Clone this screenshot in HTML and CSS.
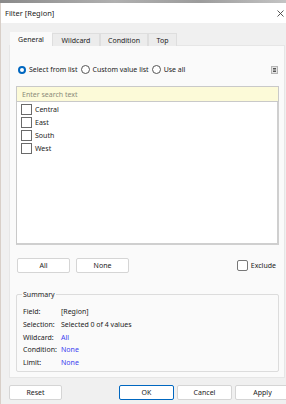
FILE: index.html
```
<!DOCTYPE html>
<html lang="en">
<head>
    <meta charset="UTF-8">
    <meta name="viewport" content="width=device-width, initial-scale=1.0">
    <title>Filter [Region]</title>
    <link rel="stylesheet" href="styles.css">
</head>
<body>
    <div class="backdrop"></div>
    <div class="dialog">
        <div class="titlebar">
            <span class="title">Filter [Region]</span>
            <span class="close">
                <svg width="7" height="7" viewBox="0 0 7 7">
                    <path d="M0.5 0.5 L6.5 6.5 M6.5 0.5 L0.5 6.5" stroke="#444" stroke-width="0.9"/>
                </svg>
            </span>
        </div>

        <!-- Tabs -->
        <div class="tabs">
            <div class="tab active">General</div>
            <div class="tab">Wildcard</div>
            <div class="tab">Condition</div>
            <div class="tab">Top</div>
        </div>

        <div class="panel">
            <div class="mode-row">
                <label class="radio"><span class="dot checked"></span>Select from list</label>
                <label class="radio"><span class="dot"></span>Custom value list</label>
                <label class="radio"><span class="dot"></span>Use all</label>
                <span class="menu-btn">
                    <svg width="7" height="8" viewBox="0 0 7 8">
                        <rect x="0.5" y="0.5" width="6" height="7" fill="#e4e4e4" stroke="#b5b5b5"/>
                        <line x1="2" y1="2.5" x2="5" y2="2.5" stroke="#555"/>
                        <line x1="2" y1="4" x2="5" y2="4" stroke="#555"/>
                        <line x1="2" y1="5.5" x2="5" y2="5.5" stroke="#555"/>
                    </svg>
                </span>
            </div>

            <div class="search">Enter search text</div>
            <div class="list">
                <div class="item"><span class="box"></span>Central</div>
                <div class="item"><span class="box"></span>East</div>
                <div class="item"><span class="box"></span>South</div>
                <div class="item"><span class="box"></span>West</div>
            </div>

            <div class="select-row">
                <button class="btn">All</button>
                <button class="btn">None</button>
                <label class="exclude"><span class="box round"></span>Exclude</label>
            </div>

            <fieldset class="summary">
                <legend>Summary</legend>
                <div class="srow"><span class="skey">Field:</span><span>[Region]</span></div>
                <div class="srow"><span class="skey">Selection:</span><span>Selected 0 of 4 values</span></div>
                <div class="srow"><span class="skey">Wildcard:</span><span class="link">All</span></div>
                <div class="srow"><span class="skey">Condition:</span><span class="link">None</span></div>
                <div class="srow"><span class="skey">Limit:</span><span class="link">None</span></div>
            </fieldset>
        </div>

        <div class="footer">
            <button class="btn wide">Reset</button>
            <button class="btn wide default">OK</button>
            <button class="btn wide">Cancel</button>
            <button class="btn wide">Apply</button>
        </div>
    </div>
</body>
</html>
```

FILE: styles.css
```
body {
    margin: 0;
    padding: 0;
    width: 286px;
    height: 404px;
    overflow: hidden;
    font-family: 'Noto Sans', 'Open Sans', sans-serif;
    font-size: 7px;
    color: #222;
    background-color: #f0f0f0;
}

.backdrop {
    height: 3px;
    background: linear-gradient(to right, #8a8a8a, #b0b0b0 40%, #9c9c9c 70%, #c4c4c4);
}

.dialog {
    background-color: #f0f0f0;
    height: 401px;
    border-left: 1px solid #d8cfc8;
    box-sizing: border-box;
}

.titlebar {
    height: 20px;
    background-color: #fff;
    display: flex;
    align-items: center;
    justify-content: space-between;
    padding: 0 0 0 4px;
}

.title {
    font-size: 7.5px;
}

.close {
    display: flex;
    margin-right: 2px;
}

.tabs {
    display: flex;
    margin: 9px 0 0 9px;
    height: 13px;
}

.tab {
    height: 13px;
    line-height: 13px;
    text-align: center;
    background-color: #ececec;
    border: 1px solid #dedede;
    border-bottom: none;
    box-sizing: border-box;
    margin-top: 1px;
}

.tab:nth-child(1) { width: 42px; }
.tab:nth-child(2) { width: 48px; }
.tab:nth-child(3) { width: 48px; }
.tab:nth-child(4) { width: 29px; }

.tab.active {
    background-color: #fafafa;
    border-color: #fafafa;
    margin-top: 0;
    height: 14px;
}

.panel {
    margin-left: 8px;
    width: 276px;
    height: 333px;
    background-color: #fafafa;
    border: 1px solid #e6e6e6;
    box-sizing: border-box;
    padding: 18px 5px 0 6px;
}

.mode-row {
    display: flex;
    align-items: center;
    height: 11px;
    padding-left: 2px;
}

.radio {
    display: flex;
    align-items: center;
    margin-right: 3px;
}

.dot {
    width: 7px;
    height: 7px;
    border: 1px solid #555;
    border-radius: 50%;
    margin-right: 3px;
    background-color: #fff;
}

.dot.checked {
    border: 2.5px solid #0067c0;
    width: 4px;
    height: 4px;
}

.menu-btn {
    margin-left: auto;
    margin-right: 1px;
    display: flex;
}

.search {
    margin-top: 11px;
    height: 16px;
    line-height: 15px;
    background-color: #fcfad8;
    border: 1px solid #c9c9c9;
    box-sizing: border-box;
    padding-left: 5px;
    color: #8a8a7a;
}

.list {
    height: 143px;
    background-color: #fff;
    border: 1px solid #c9c9c9;
    border-top: none;
    border-right: 2px solid #cfcfcf;
    border-bottom: 2px solid #cfcfcf;
    box-sizing: border-box;
    padding: 1px 0 0 4px;
}

.item {
    display: flex;
    align-items: center;
    height: 13px;
}

.box {
    width: 9px;
    height: 9px;
    border: 1px solid #6a6a6a;
    background-color: #fff;
    margin-right: 3px;
}

.box.round {
    border-radius: 2px;
    border-color: #777;
}

.select-row {
    display: flex;
    align-items: center;
    margin-top: 13px;
    padding-left: 1px;
}

.btn {
    font-family: inherit;
    font-size: 7px;
    color: #222;
    background-color: #fff;
    border: 1px solid #d5d5d5;
    border-radius: 2px;
    height: 15px;
    width: 53px;
    padding: 0;
    margin-right: 6px;
}

.exclude {
    margin-left: auto;
    display: flex;
    align-items: center;
    margin-right: 3px;
}

.summary {
    margin: 17px 0 0 0;
    height: 82px;
    border: 1px solid #dcdcdc;
    border-radius: 2px;
    padding: 7px 0 0 6px;
    box-sizing: border-box;
}

.summary legend {
    padding: 0 1px;
    margin-left: -1px;
}

.srow {
    display: flex;
    height: 12.75px;
    line-height: 12.75px;
}

.skey {
    width: 38px;
}

.link {
    color: #3c3cf0;
}

.footer {
    display: flex;
    margin-top: 7px;
    padding-left: 8px;
}

.btn.wide {
    width: 55px;
    margin-right: 3px;
}

.btn.wide:first-child {
    width: 53px;
    margin-right: auto;
}

.btn.default {
    border-color: #0067c0;
}

.footer .btn:last-child {
    margin-right: -4px;
}
```
